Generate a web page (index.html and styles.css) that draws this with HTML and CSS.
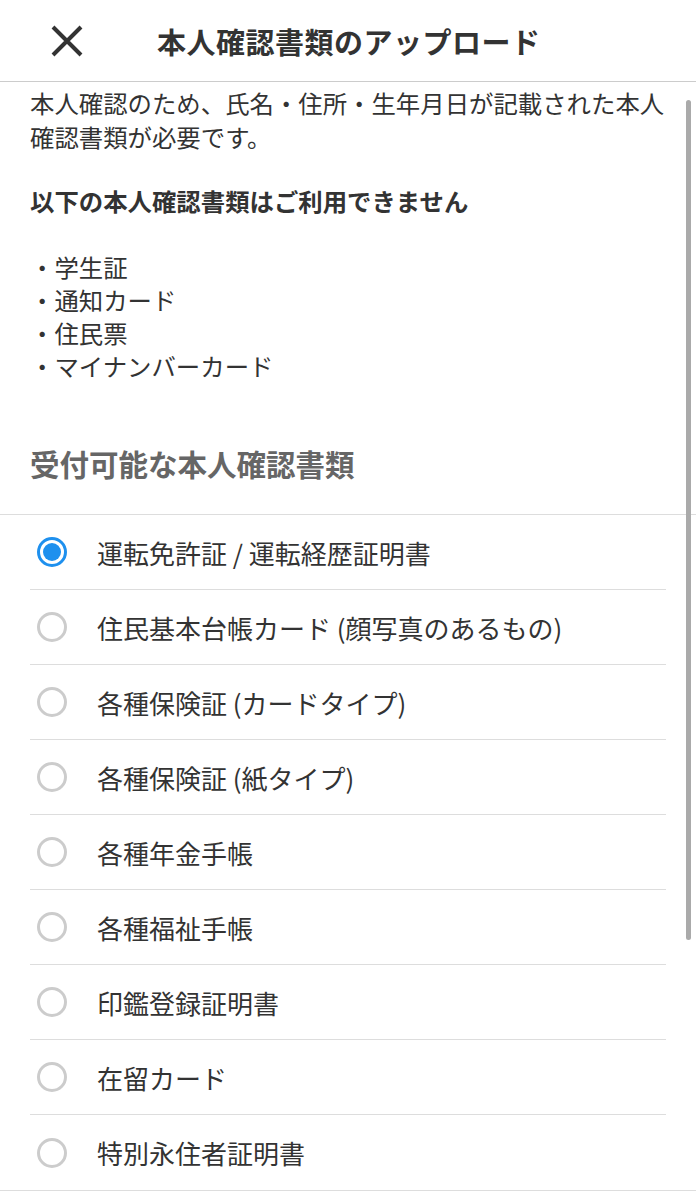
FILE: index.html
```html
<!DOCTYPE html>
<html lang="ja">
<head>
    <meta charset="UTF-8">
    <title>本人確認書類のアップロード</title>
    <link rel="stylesheet" href="styles.css">
</head>
<body>

    <!-- Header -->
    <div class="header">
        <svg class="close-icon" viewBox="0 0 34 32" width="34" height="32">
            <path d="M3 2 L31 30 M31 2 L3 30" stroke="#333" stroke-width="4" stroke-linecap="butt" fill="none"/>
        </svg>
        <h1>本人確認書類のアップロード</h1>
    </div>

    <!-- Content -->
    <div class="content">
        <p class="intro">本人確認のため、氏名・住所・生年月日が記載された本人確認書類が必要です。</p>
        <p class="notice">以下の本人確認書類はご利用できません</p>
        <ul class="ng-list">
            <li>・学生証</li>
            <li>・通知カード</li>
            <li>・住民票</li>
            <li>・マイナンバーカード</li>
        </ul>
        <h2>受付可能な本人確認書類</h2>
    </div>

    <div class="doc-list">
        <label class="doc-item"><span class="radio checked"></span>運転免許証 / 運転経歴証明書</label>
        <label class="doc-item"><span class="radio"></span>住民基本台帳カード (顔写真のあるもの)</label>
        <label class="doc-item"><span class="radio"></span>各種保険証 (カードタイプ)</label>
        <label class="doc-item"><span class="radio"></span>各種保険証 (紙タイプ)</label>
        <label class="doc-item"><span class="radio"></span>各種年金手帳</label>
        <label class="doc-item"><span class="radio"></span>各種福祉手帳</label>
        <label class="doc-item"><span class="radio"></span>印鑑登録証明書</label>
        <label class="doc-item"><span class="radio"></span>在留カード</label>
        <label class="doc-item"><span class="radio"></span>特別永住者証明書</label>
    </div>

    <!-- Scrollbar -->
    <div class="scrollbar"></div>
</body>
</html>
```

FILE: styles.css
```css
* {
    margin: 0;
    padding: 0;
    box-sizing: border-box;
}

body {
    font-family: "Noto Sans CJK JP", "Noto Sans", sans-serif;
    color: #333;
    background: #fff;
    height: 1200px;
    overflow: hidden;
    position: relative;
}

.header {
    height: 82px;
    display: flex;
    align-items: center;
    padding-left: 50px;
    border-bottom: 1px solid #ccc;
}

.close-icon {
    flex-shrink: 0;
}

.header h1 {
    margin-left: 73px;
    font-size: 29px;
    font-weight: 700;
    color: #333;
    letter-spacing: 0.5px;
}

.content {
    padding: 4px 30px 0 30px;
    font-size: 24.4px;
}

.intro {
    line-height: 34px;
    width: 640px;
}

.notice {
    font-weight: 700;
    line-height: 34px;
    margin-top: 30px;
}

.ng-list {
    list-style: none;
    margin-top: 32px;
}

.ng-list li {
    line-height: 33px;
}

.content h2 {
    font-size: 29.5px;
    font-weight: 700;
    color: #666;
    line-height: 40px;
    margin-top: 61px;
    margin-bottom: 31px;
}

.doc-list {
    border-top: 1px solid #ddd;
    border-bottom: 1px solid #ddd;
}

.doc-item {
    display: flex;
    align-items: center;
    height: 75px;
    margin: 0 30px;
    padding-left: 7px;
    font-size: 26px;
    color: #333;
    border-bottom: 1px solid #ddd;
}

.doc-item:last-child {
    border-bottom: none;
}

.radio {
    width: 30px;
    height: 30px;
    border-radius: 50%;
    border: 3px solid #ccc;
    margin-right: 30px;
    flex-shrink: 0;
    position: relative;
}

.radio.checked {
    border-color: #1E90EE;
}

.radio.checked::after {
    content: "";
    position: absolute;
    top: 3px;
    left: 3px;
    width: 18px;
    height: 18px;
    border-radius: 50%;
    background: #1E90EE;
}

.scrollbar {
    position: absolute;
    top: 100px;
    left: 686px;
    width: 5px;
    height: 840px;
    border-radius: 3px;
    background: #aaa;
}
```
